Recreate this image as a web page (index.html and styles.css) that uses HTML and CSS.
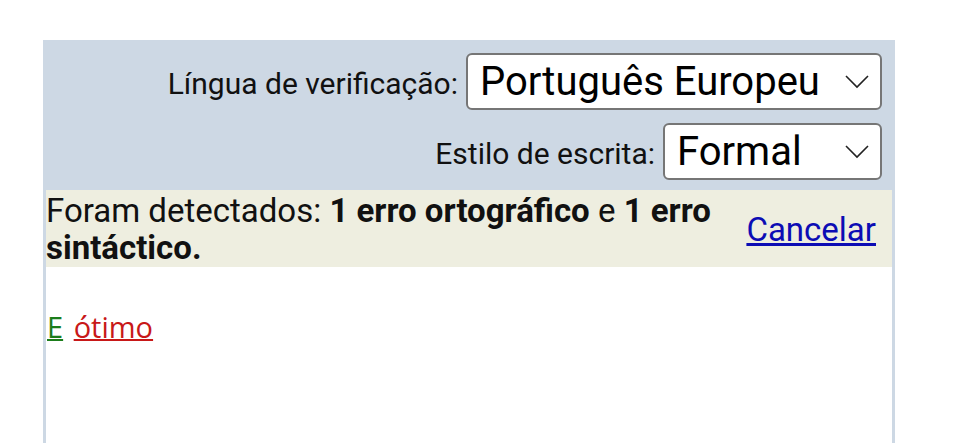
FILE: index.html
```html
<!DOCTYPE html>
<html lang="pt">
<head>
<meta charset="utf-8">
<title>Verificação</title>
<link rel="stylesheet" href="styles.css">
</head>
<body>
<div class="page">
  <div class="panel">
    <div class="header">
      <div class="row">
        <span class="label">Língua de verificação:</span>
        <div class="select lang">
          <span class="value">Português Europeu</span>
          <svg class="chev" width="24" height="14" viewBox="0 0 24 14"><path d="M1 1 L12 12 L23 1" fill="none" stroke="#222" stroke-width="1.6"/></svg>
        </div>
      </div>
      <div class="row">
        <span class="label">Estilo de escrita:</span>
        <div class="select style">
          <span class="value">Formal</span>
          <svg class="chev" width="24" height="14" viewBox="0 0 24 14"><path d="M1 1 L12 12 L23 1" fill="none" stroke="#222" stroke-width="1.6"/></svg>
        </div>
      </div>
    </div>
    <div class="msg">
      <p class="msg-text">Foram detectados: <b>1 erro ortográfico</b> e <b>1 erro sintáctico.</b></p>
      <a class="cancel" href="#">Cancelar</a>
    </div>
    <div class="content">
      <span class="syn">E</span> <span class="orth">ótimo</span>
    </div>
  </div>
</div>
</body>
</html>
```
FILE: styles.css
```css
html, body {
  margin: 0;
  padding: 0;
  background: #ffffff;
}
body {
  font-family: Roboto, "Noto Sans", sans-serif;
  color: #111;
}
.page {
  padding: 40px 0 0 43px;
}
.panel {
  width: 852px;
  box-sizing: border-box;
  border-left: 3px solid #cdd8e4;
  border-right: 3px solid #cdd8e4;
  min-height: 403px;
  background: #fff;
}
.header {
  background: #cdd8e4;
  padding: 13px 10px 10px;
  display: flex;
  flex-direction: column;
  align-items: flex-end;
  gap: 13px;
}
.row {
  display: flex;
  align-items: center;
  gap: 8px;
}
.label {
  font-size: 30px;
  color: #111;
  padding-top: 4px;
}
.select {
  height: 57px;
  box-sizing: border-box;
  border: 2px solid #767676;
  border-radius: 6px;
  background: #fff;
  display: flex;
  align-items: center;
  justify-content: space-between;
  padding: 0 11px 0 12px;
  font-size: 40px;
  color: #000;
}
.select.lang { width: 416px; }
.select.style { width: 219px; }
.chev { display: block; }
.msg {
  background: #eeeee0;
  height: 77px;
  box-sizing: border-box;
  display: flex;
  align-items: center;
  justify-content: space-between;
  padding: 1px 16px 0 0;
  font-size: 33px;
  line-height: 37px;
}
.msg-text {
  margin: 0;
  width: 690px;
}
.cancel {
  color: #0c0cb4;
  text-decoration: underline;
}
.content {
  padding: 40px 0 0 1px;
  font-family: "Open Sans", sans-serif;
  font-size: 29px;
}
.syn {
  color: #1b7d1b;
  text-decoration: underline;
  text-decoration-thickness: 2px;
}
.orth {
  margin-left: 3px;
  color: #c81818;
  text-decoration: underline;
  text-decoration-thickness: 2px;
}
```
